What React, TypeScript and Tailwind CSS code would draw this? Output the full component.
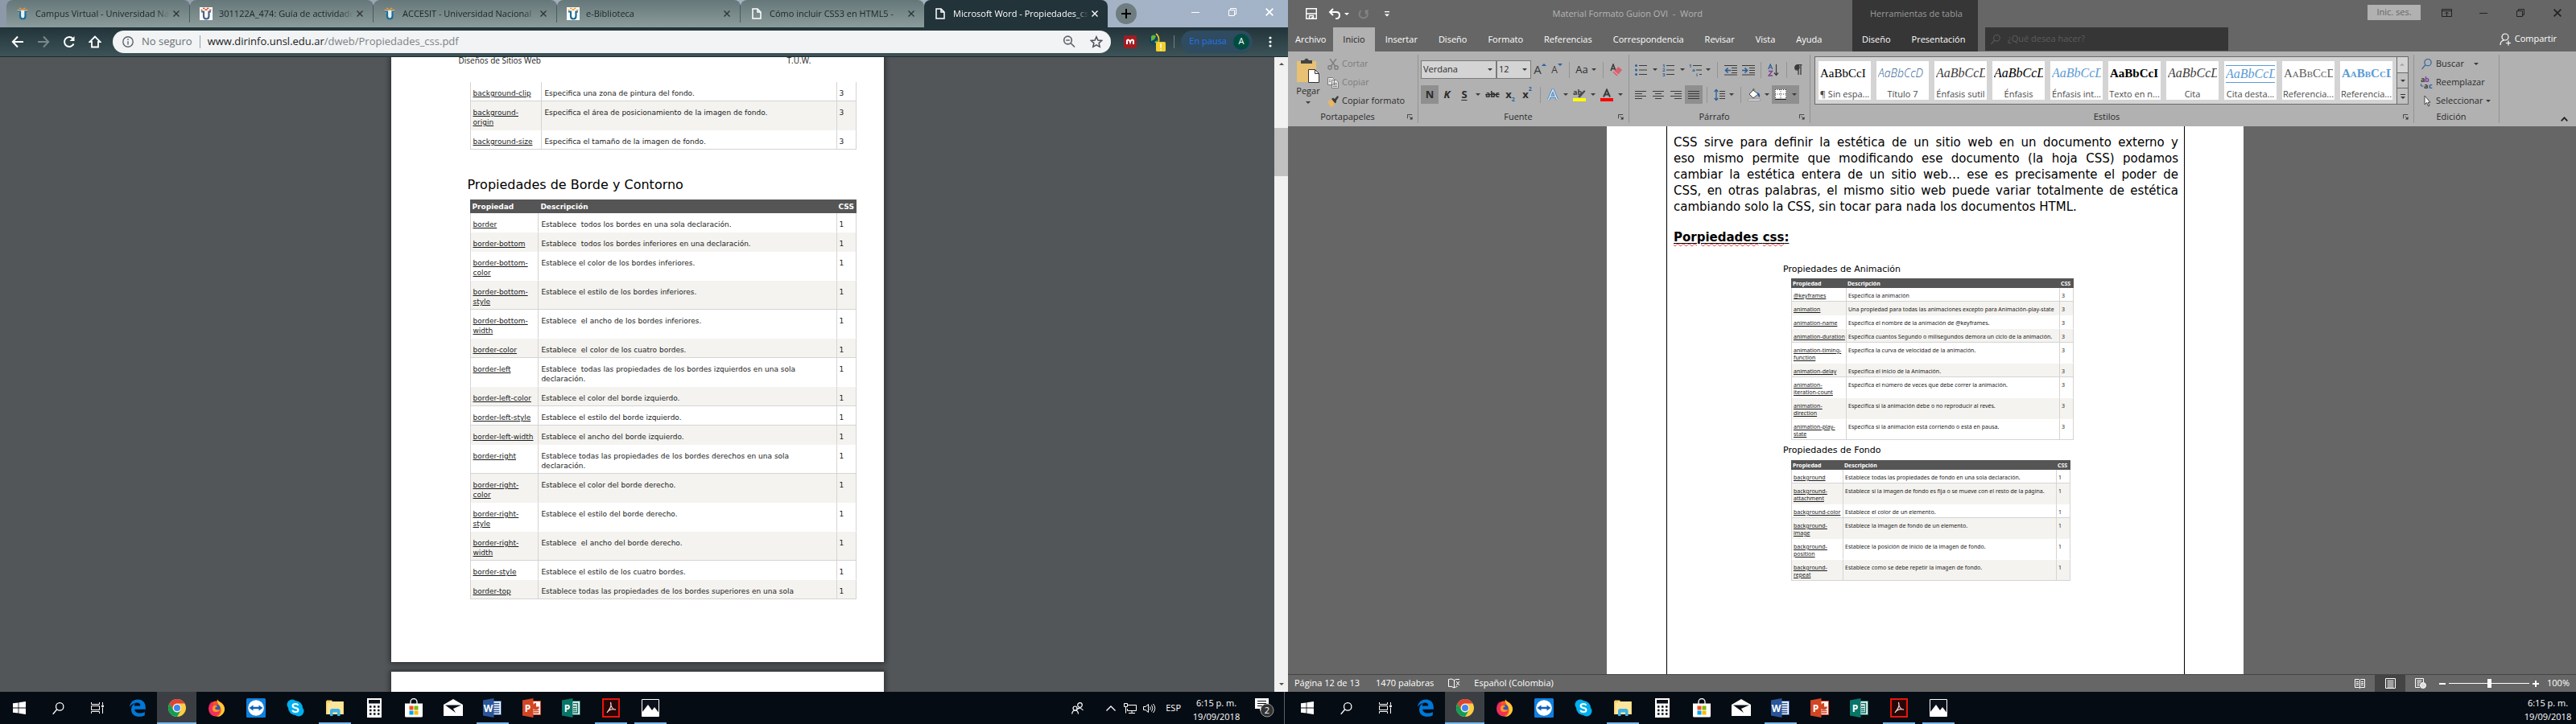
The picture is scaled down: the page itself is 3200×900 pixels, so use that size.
import React from "react";

type Kids = { children?: React.ReactNode };

/* ---------- shared bits ---------- */

const Caret = ({ className = "text-[#3a3a3a]" }: { className?: string }) => (
  <svg viewBox="0 0 6 3" className={"w-[6px] h-[3px] shrink-0 " + className}>
    <path d="M0 0h6L3 3z" fill="currentColor" />
  </svg>
);

const Lens = ({ className }: { className: string }) => (
  <svg viewBox="0 0 20 20" className={className} fill="none" stroke="currentColor" strokeWidth="1.5">
    <circle cx="12" cy="7.5" r="5.5" />
    <path d="M8 11.5L2 18.5" />
  </svg>
);

/* ---------- property tables ---------- */

type Row = { name: string; text: string; css: number; line?: boolean };

const backgroundRows: Row[] = [
  { name: "background-clip", text: "Especifica una zona de pintura del fondo.", css: 3, line: true },
  { name: "background-\norigin", text: "Especifica el área de posicionamiento de la imagen de fondo.", css: 3 },
  { name: "background-size", text: "Especifica el tamaño de la imagen de fondo.", css: 3, line: true },
];

const borderRows: Row[] = [
  { name: "border", text: "Establece  todos los bordes en una sola declaración.", css: 1 },
  { name: "border-bottom", text: "Establece  todos los bordes inferiores en una declaración.", css: 1 },
  { name: "border-bottom-\ncolor", text: "Establece el color de los bordes inferiores.", css: 1 },
  { name: "border-bottom-\nstyle", text: "Establece el estilo de los bordes inferiores.", css: 1, line: true },
  { name: "border-bottom-\nwidth", text: "Establece  el ancho de los bordes inferiores.", css: 1 },
  { name: "border-color", text: "Establece  el color de los cuatro bordes.", css: 1, line: true },
  { name: "border-left", text: "Establece  todas las propiedades de los bordes izquierdos en una sola\ndeclaración.", css: 1 },
  { name: "border-left-color", text: "Establece el color del borde izquierdo.", css: 1, line: true },
  { name: "border-left-style", text: "Establece el estilo del borde izquierdo.", css: 1, line: true },
  { name: "border-left-width", text: "Establece el ancho del borde izquierdo.", css: 1 },
  { name: "border-right", text: "Establece todas las propiedades de los bordes derechos en una sola\ndeclaración.", css: 1, line: true },
  { name: "border-right-\ncolor", text: "Establece el color del borde derecho.", css: 1 },
  { name: "border-right-\nstyle", text: "Establece el estilo del borde derecho.", css: 1 },
  { name: "border-right-\nwidth", text: "Establece  el ancho del borde derecho.", css: 1, line: true },
  { name: "border-style", text: "Establece el estilo de los cuatro bordes.", css: 1 },
  { name: "border-top", text: "Establece todas las propiedades de los bordes superiores en una sola", css: 1, line: true },
];

const animationRows: Row[] = [
  { name: "@keyframes", text: "Especifica la animación", css: 3, line: true },
  { name: "animation", text: "Una propiedad para todas las animaciones excepto para Animación-play-state", css: 3 },
  { name: "animation-name", text: "Especifica el nombre de la animación de @keyframes.", css: 3 },
  { name: "animation-duration", text: "Especifica cuantos Segundo o milisegundos demora un ciclo de la animación.", css: 3, line: true },
  { name: "animation-timing-\nfunction", text: "Especifica la curva de velocidad de la animación.", css: 3 },
  { name: "animation-delay", text: "Especifica el inicio de la Animación.", css: 3, line: true },
  { name: "animation-\niteration-count", text: "Especifica el número de veces que debe correr la animación.", css: 3 },
  { name: "animation-\ndirection", text: "Especifica si la animación debe o no reproducir al revés.", css: 3 },
  { name: "animation-play-\nstate", text: "Especifica si la animación está corriendo o está en pausa.", css: 3, line: true },
];

const fondoRows: Row[] = [
  { name: "background", text: "Establece todas las propiedades de fondo en una sola declaración.", css: 1, line: true },
  { name: "background-\nattachment", text: "Establece si la imagen de fondo es fija o se mueve con el resto de la página.", css: 1 },
  { name: "background-color", text: "Establece el color de un elemento.", css: 1, line: true },
  { name: "background-\nimage", text: "Establece la imagen de fondo de un elemento.", css: 1 },
  { name: "background-\nposition", text: "Establece la posición de inicio de la imagen de fondo.", css: 1 },
  { name: "background-\nrepeat", text: "Establece como se debe repetir la imagen de fondo.", css: 1, line: true },
];

function PropertyTable({ rows, small, cols, header = true }: { rows: Row[]; small?: boolean; cols: [string, string, string]; header?: boolean }) {
  const cell = small ? "pl-[2px] pt-[5px] pb-[2px]" : "pl-[3px] pt-[8px] pb-[3px]";
  const head = small ? "h-[12px] pl-[2px]" : "h-[17px] pl-[3px]";
  return (
    <table
      className={
        "table-fixed border-separate border-spacing-0 text-left text-[#1c1c1c] " +
        (small ? "text-[7px] leading-[9px] font-['Noto_Sans',sans-serif]" : "text-[9px] leading-[12px] font-['DejaVu_Sans',sans-serif]")
      }
    >
      <colgroup>
        {cols.map((c, i) => (
          <col key={i} className={c} />
        ))}
      </colgroup>
      {header && (
        <thead>
          <tr className="bg-[#555555] text-white">
            {["Propiedad", "Descripción", "CSS"].map((h) => (
              <th key={h} className={"p-0 font-bold " + head}>
                {h}
              </th>
            ))}
          </tr>
        </thead>
      )}
      <tbody>
        {rows.map((r, i) => {
          const line = r.line ? "border-b-[#d4d4d4]" : "border-b-transparent";
          const base = "align-top whitespace-pre border-l border-b border-l-[#d4d4d4] " + cell + " " + line;
          return (
            <tr key={r.name} className={i % 2 ? "bg-[#f4f3f0]" : "bg-white"}>
              <td className={base}>
                <a href="#" className="underline underline-offset-1">
                  {r.name}
                </a>
              </td>
              <td className={base}>{r.text}</td>
              <td className={base + " border-r border-r-[#d4d4d4]"}>{r.css}</td>
            </tr>
          );
        })}
      </tbody>
    </table>
  );
}

/* ---------- taskbar ---------- */

const WindowsLogo = () => (
  <svg viewBox="0 0 16 16" className="w-4 h-4" fill="#fff">
    <path d="M0 2.3l6.6-.9v6.2H0zM7.4 1.3L16 0v7.6H7.4zM0 8.4h6.6v6.2L0 13.700zM7.400 8.400H16V16l-8.600-1.200z" />
  </svg>
);
const TaskView = () => (
  <svg viewBox="0 0 16 16" className="w-4 h-4" fill="none" stroke="#fff" strokeWidth="1">
    <path d="M.5 1v2.500h10V1M.5 15v-2.500h10V15M.5 5.500h10v5H.5zM14.500 1v3M14.500 7.500V15" />
    <path d="M13.500 5h2v1.500h-2z" fill="#fff" />
  </svg>
);
const Edge = () => (
  <svg viewBox="0 0 20 22" className="w-5 h-[22px]" fill="#0078d7">
    <path d="M0 9.800C.7 4.200 4.600.500 10.200.500c6.200 0 9.600 4.300 9.600 10v2.200H6.300c.2 3.300 3 4.900 6.500 4.900 2.300 0 4.300-.6 6-1.600v4.300c-1.900 1-4.300 1.500-6.800 1.500-6 0-10-3.300-10-8.800 0-3.600 2-6.600 5-8.100-.7.9-1.100 2.200-1.200 3.500h7.500c0-2.300-1.200-3.900-4-3.900C5.600 4.500 2 6.600 0 9.800z" />
  </svg>
);
const Chrome = () => (
  <svg viewBox="0 0 22 22" className="w-[22px] h-[22px]">
    <circle cx="11" cy="11" r="11" fill="#ffcd40" />
    <path d="M11 0a11 11 0 0 1 9.600 5.500H11A5.500 5.500 0 0 0 6.200 13.700L1.500 5.500A11 11 0 0 1 11 0z" fill="#db4437" />
    <path d="M1.500 5.500l4.800 8.300A5.500 5.500 0 0 0 15.800 13.700L11 22A11 11 0 0 1 1.500 5.500z" fill="#0f9d58" />
    <circle cx="11" cy="11" r="5.200" fill="#f1f1f1" />
    <circle cx="11" cy="11" r="4" fill="#4285f4" />
  </svg>
);
const Firefox = () => (
  <svg viewBox="0 0 22 22" className="w-[22px] h-[22px]">
    <circle cx="11" cy="12" r="9.800" fill="#ff4f2b" />
    <path d="M12 0c1 4 8 5 9 11 .8 6-4 11-9.500 11C17 19 18 14 15 9c-1-2-4-5-3-9z" fill="#ffcc33" />
    <path d="M1 12C1 7 3 4 5 2.500 5 5 6 6 8 6c-2 2-3 5-1 8 1.500 2 5 3 8 1-1 4-4 6-7 6-4 0-7-4-7-9z" fill="#e31587" opacity=".55" />
    <circle cx="11.500" cy="11" r="4" fill="#3a55b5" />
    <path d="M7 9c2-2 4-1 5 0l-3 2c0 2 3 3 6 2-1 3-5 4-8 2-1.500-1.500-1.500-4 0-6z" fill="#ff9a1f" />
  </svg>
);
const TeamViewer = () => (
  <svg viewBox="0 0 24 24" className="w-6 h-6">
    <rect width="24" height="24" rx="1.500" fill="#0e80e0" />
    <circle cx="12" cy="12" r="9.800" fill="#fff" />
    <path d="M3.500 12l5-3.500v2.200h7V8.500l5 3.500-5 3.500v-2.200h-7v2.200z" fill="#0e60b8" />
  </svg>
);
const Skype = () => (
  <svg viewBox="0 0 22 22" className="w-[22px] h-[22px]">
    <circle cx="7" cy="7" r="6.500" fill="#00aff0" />
    <circle cx="15" cy="15" r="6.500" fill="#00aff0" />
    <circle cx="11" cy="11" r="9" fill="#00aff0" />
    <path d="M14.500 7.800C13.800 6.600 12.500 6 11 6 9 6 7.500 7 7.500 8.500c0 3.500 7 1.600 7 5 0 1.600-1.600 2.500-3.500 2.500-1.800 0-3.200-.7-3.900-2" fill="none" stroke="#fff" strokeWidth="2" />
  </svg>
);
const Explorer = () => (
  <svg viewBox="0 0 22 20" className="w-[22px] h-5">
    <path d="M0 2l1-1.500h6L8 2h14v16H0z" fill="#f5ce69" />
    <path d="M1.500 3.500h3l1-1.500H21V18H1.500z" fill="#fde69c" />
    <path d="M5 20v-7.500L7 11h8.500l2 1.500V20h-3.500v-4.500H8.500V20z" fill="#3fb0e8" />
  </svg>
);
const Calculator = () => (
  <svg viewBox="0 0 18 24" className="w-[18px] h-6">
    <path d="M0 0h18v24H0z" fill="#fff" />
    <path d="M2 2h14v4.500H2z" fill="#0a1019" />
    <path d="M3 10.500h13M3 15h13M3 19.500h13" stroke="#0a1019" strokeWidth="2.500" strokeDasharray="2.500 2.500" />
  </svg>
);
const Store = () => (
  <svg viewBox="0 0 22 24" className="w-[22px] h-6">
    <path d="M7 8V4.500a4 4 0 0 1 8 0V8" fill="none" stroke="#fff" strokeWidth="1.300" />
    <path d="M0 6.500h22V22q0 1.500-1.500 1.500h-19Q0 23.500 0 22z" fill="#fff" />
    <path d="M5.500 9.500h5v5h-5z" fill="#f25022" />
    <path d="M11.500 9.500h5v5h-5z" fill="#7fba00" />
    <path d="M5.500 15.500h5v5h-5z" fill="#00a4ef" />
    <path d="M11.500 15.500h5v5h-5z" fill="#ffb900" />
  </svg>
);
const Mail = () => (
  <svg viewBox="0 0 24 22" className="w-6 h-[22px]">
    <path d="M0 7l12-7 12 7v14H0z" fill="#fff" />
    <path d="M2 7.500l20 0-10 4.500 3 5z" fill="#0a1019" />
  </svg>
);

function OfficeIcon({ letter, color, dark, kind }: { letter: string; color: string; dark: string; kind: "doc" | "chart" | "pub" }) {
  return (
    <svg viewBox="0 0 23 24" className="w-[23px] h-6">
      <path d="M12 3.500h10.500v17H12z" fill={kind === "doc" ? "#fff" : "#fdf3f0"} stroke={color} />
      {kind === "doc" && <path d="M13 6.500h7.500M13 9.500h7.500M13 12.500h7.500M13 15.500h7.500M13 18h7.500" stroke={color} strokeWidth="1.300" />}
      {kind === "chart" && (
        <>
          <path d="M17 6v4.500h4A4.300 4.300 0 1 1 17 6z" fill={color} />
          <path d="M13.500 15.500h7M13.500 18h7" stroke={color} strokeWidth="1.300" />
        </>
      )}
      {kind === "pub" && <path d="M14 6.500h5.500V18H14M14 10h4M14 13h4M14 15.500h4" stroke={color} strokeWidth="1.500" fill="none" />}
      <path d="M0 2.500L13.500 0v24L0 21.500z" fill={dark} />
      <text x="6.500" y="16.500" textAnchor="middle" fontSize="12" fontWeight="700" fill="#fff" className="font-['Open_Sans',sans-serif]">
        {letter}
      </text>
    </svg>
  );
}
const Acrobat = () => (
  <svg viewBox="0 0 22 24" className="w-[22px] h-6">
    <path d="M1 1h20v22H1z" fill="#2b0505" stroke="#e2170c" strokeWidth="2" />
    <path d="M10.500 5c1.500 4 0 7-4.500 13 2-3.500 6-5 11-4-3.500.5-6.500-3.500-6.500-9z" fill="none" stroke="#e8d8d8" strokeWidth="1.200" />
  </svg>
);
const Photos = () => (
  <svg viewBox="0 0 22 22" className="w-[22px] h-[22px]">
    <path d="M.5.500h21v21H.5z" fill="#0a1019" stroke="#fff" />
    <path d="M1 21v-5l7-9 5 7 3-4 5 6.500V21z" fill="#fff" />
  </svg>
);

const taskItems: { label: string; icon: React.ReactNode; open?: boolean; active?: boolean }[] = [
  { label: "Edge", icon: <Edge /> },
  { label: "Chrome", icon: <Chrome />, active: true },
  { label: "Firefox", icon: <Firefox /> },
  { label: "TeamViewer", icon: <TeamViewer /> },
  { label: "Skype", icon: <Skype /> },
  { label: "Explorador", icon: <Explorer />, open: true },
  { label: "Calculadora", icon: <Calculator /> },
  { label: "Tienda", icon: <Store /> },
  { label: "Correo", icon: <Mail /> },
  { label: "Word", icon: <OfficeIcon letter="W" color="#2b579a" dark="#2a5699" kind="doc" />, open: true },
  { label: "PowerPoint", icon: <OfficeIcon letter="P" color="#d24625" dark="#d24625" kind="chart" /> },
  { label: "Publisher", icon: <OfficeIcon letter="P" color="#077568" dark="#077568" kind="pub" /> },
  { label: "Acrobat", icon: <Acrobat />, open: true },
  { label: "Fotos", icon: <Photos />, open: true },
];

function Taskbar({ children }: Kids) {
  return (
    <nav className="h-10 shrink-0 flex items-stretch bg-[#060c14] text-white font-['Open_Sans',sans-serif] text-[11px]">
      <button aria-label="Inicio" className="w-12 flex items-center justify-center"><WindowsLogo /></button>
      <button aria-label="Buscar" className="w-12 flex items-center justify-center"><Lens className="w-[17px] h-[17px]" /></button>
      <button aria-label="Vista de tareas" className="w-[50px] flex items-center justify-center"><TaskView /></button>
      {taskItems.map((t) => (
        <button key={t.label} aria-label={t.label} className="w-[49px] flex flex-col items-center justify-between">
          <span className={"flex-1 self-stretch flex items-center justify-center pt-[2px] " + (t.active ? "bg-[#3b3f44]" : "")}>{t.icon}</span>
          <span className={"h-[2px] " + (t.active ? "w-full bg-[#76b9ed]" : t.open ? "w-10 bg-[#76b9ed]" : "w-0")} />
        </button>
      ))}
      <div className="ml-auto flex items-center">{children}</div>
    </nav>
  );
}

const Clock = () => (
  <div className="w-[62px] text-center leading-[17px] pt-[3px]">
    <div>6:15 p. m.</div>
    <div>19/09/2018</div>
  </div>
);

/* ---------- browser ---------- */

const Unad = ({ boxed, red }: { boxed?: boolean; red?: boolean }) => (
  <svg viewBox="0 0 16 16" className="w-4 h-4 shrink-0">
    {boxed && <path d="M0 0h16v16H0z" fill="#fff" />}
    {!boxed && <path d="M2.500 5.500h4v6q0 2 1.800 2 1.700 0 1.700-2v-6h3.500" fill="none" stroke="#e6f2f5" strokeWidth="3.600" />}
    <path d="M2 5.500h3v5.500q0 3.500 3.300 3.500 3.200 0 3.200-3.500V5.500H14" fill="none" stroke={red ? "#4a6484" : "#1c6c96"} strokeWidth="2.200" />
    <path d="M1.500 3.500h2M4 1.500h2.500M9 1.500h2.500M12 3.500h2.500M6.500 3.200h3" stroke={red ? "#d8502a" : "#f39a2c"} strokeWidth="1.700" />
  </svg>
);
const PageIcon = () => (
  <svg viewBox="0 0 12 14" className="w-3 h-[14px] shrink-0 mx-[2px]" fill="none" stroke="#fff" strokeWidth="1.500">
    <path d="M1 1h6l4 4v8H1zM7 1v4h4" />
  </svg>
);
const Cross = ({ className = "w-2 h-2" }: { className?: string }) => (
  <svg viewBox="0 0 8 8" className={"shrink-0 " + className} stroke="currentColor" strokeWidth="1.400">
    <path d="M.5.500l7 7M7.500.500l-7 7" />
  </svg>
);

const tabs = [
  { title: "Campus Virtual - Universidad Nacional", icon: <Unad /> },
  { title: "301122A_474: Guía de actividades", icon: <Unad boxed red /> },
  { title: "ACCESIT - Universidad Nacional", icon: <Unad /> },
  { title: "e-Biblioteca", icon: <Unad boxed /> },
  { title: "Cómo incluir CSS3 en HTML5 - ", icon: <PageIcon /> },
  { title: "Microsoft Word - Propiedades_css", icon: <PageIcon />, active: true },
];

const toolIcon = "w-8 h-7 flex items-center justify-center";

function Browser() {
  return (
    <section className="flex flex-col min-h-0 flex-1 bg-[#525659] font-['Open_Sans',sans-serif]">
      <header className="shrink-0">
        <div className="h-[34px] flex pl-2 text-[11px] bg-linear-to-r from-[#8d99a8] via-[#a6b1be] to-[#a3b3c8]">
          {tabs.map((t, i) => (
            <div
              key={t.title}
              className={
                "w-[228px] flex items-center pl-3 pr-3 rounded-t-lg " +
                (t.active ? "bg-[#22333a] text-white" : "bg-linear-to-b from-[#657779] to-[#8c9c9c] text-[#1c2426]")
              }
            >
              {t.icon}
              <span className="ml-2 flex-1 overflow-hidden whitespace-pre mask-r-from-90%">{t.title}</span>
              <button aria-label="Cerrar pestaña" className={"ml-1 " + (t.active ? "text-white" : "text-[#2c3436]")}><Cross /></button>
              {i < 4 && <span className="w-px h-[22px] bg-[#4d5b5f] ml-3 -mr-3" />}
            </div>
          ))}
          <button aria-label="Nueva pestaña" className="self-center ml-[10px] w-[26px] h-[26px] rounded-full bg-[#6f7d80] flex items-center justify-center text-black">
            <svg viewBox="0 0 12 12" className="w-3 h-3" stroke="currentColor" strokeWidth="2"><path d="M6 0v12M0 6h12" /></svg>
          </button>
          <div className="ml-auto flex text-white pb-[5px]">
            <button aria-label="Minimizar" className="w-[46px] flex items-center justify-center"><svg viewBox="0 0 10 10" className="w-[10px] h-[10px]" stroke="currentColor"><path d="M0 5.500h10" /></svg></button>
            <button aria-label="Restaurar" className="w-[46px] flex items-center justify-center"><svg viewBox="0 0 10 10" className="w-[10px] h-[10px]" stroke="currentColor" fill="none"><path d="M.5 2.500h7v7h-7zM2.500 2.500v-2h7v7h-2" /></svg></button>
            <button aria-label="Cerrar" className="w-[46px] flex items-center justify-center"><Cross className="w-[10px] h-[10px]" /></button>
          </div>
        </div>
        <div className="h-[37px] flex items-center pl-[6px] pb-px text-white border-b border-[#1e2b30] bg-linear-to-b from-[#22343a] to-[#3c5357]">
          <button aria-label="Atrás" className={toolIcon}><svg viewBox="0 0 16 16" className="w-4 h-4" fill="none" stroke="currentColor" strokeWidth="2"><path d="M15 8H2M8 1.500L1.800 8 8 14.500" /></svg></button>
          <button aria-label="Adelante" className={toolIcon + " text-[#7b888b]"}><svg viewBox="0 0 16 16" className="w-4 h-4" fill="none" stroke="currentColor" strokeWidth="2"><path d="M1 8h13M8 1.500L14.200 8 8 14.500" /></svg></button>
          <button aria-label="Recargar" className={toolIcon}><svg viewBox="0 0 16 16" className="w-4 h-4" fill="none" stroke="currentColor" strokeWidth="2"><path d="M13.500 10.500A6 6 0 1 1 12.500 4" /><path d="M14.500 1v6h-6z" fill="currentColor" stroke="none" /></svg></button>
          <button aria-label="Inicio" className={toolIcon}><svg viewBox="0 0 16 16" className="w-4 h-4" fill="none" stroke="currentColor" strokeWidth="1.800"><path d="M8 1.500L1.500 8H4v6.500h8V8h2.500z" /></svg></button>
          <div className="ml-[6px] h-7 flex-1 rounded-full bg-[#f1f3f4] flex items-center pl-3 pr-[10px] text-[13px]">
            <svg viewBox="0 0 14 14" className="w-[14px] h-[14px]" fill="none" stroke="#5f6368" strokeWidth="1.400"><circle cx="7" cy="7" r="6.200" /><path d="M7 6.200v4.300M7 3.300v1.600" /></svg>
            <span className="ml-[10px] text-[#6b7074]">No seguro</span>
            <span className="w-px h-4 bg-[#9aa0a6] mx-[9px]" />
            <span className="flex-1 text-[#7d8286]"><span className="text-[#202124]">www.dirinfo.unsl.edu.ar</span>/dweb/Propiedades_css.pdf</span>
            <svg viewBox="0 0 16 16" className="w-4 h-4" fill="none" stroke="#5f6368" strokeWidth="1.700"><circle cx="6.500" cy="6" r="4.800" /><path d="M10 9.500l5 5M4.200 6h4.600" /></svg>
            <svg viewBox="0 0 16 16" className="w-4 h-4 ml-[18px]" fill="none" stroke="#4d5156" strokeWidth="1.500"><path d="M8 1.700l1.900 4.400 4.800.4-3.600 3.100 1.100 4.700L8 11.800l-4.200 2.500 1.100-4.700L1.300 6.500l4.800-.4z" /></svg>
          </div>
          <div className="flex items-center">
            <svg viewBox="0 0 16 16" className="w-4 h-4 ml-4"><rect width="16" height="16" rx="1.500" fill="#a01d22" /><path d="M4 11V7q0-1.500 1.500-1.500T8 8.500q1-3 2.500-3T12 7v4" stroke="#fff" strokeWidth="2" fill="none" /></svg>
            <svg viewBox="0 0 24 24" className="w-6 h-6 ml-[14px]">
              <circle cx="8" cy="9" r="6.500" fill="#0d4468" />
              <path d="M4 5q3-3 6 0l-2 4-4 2zM8 12l4-2-1 5z" fill="#6eb52a" />
              <path d="M10 2q5 3 3 12" stroke="#f2c61d" strokeWidth="1.800" fill="none" />
              <rect x="10" y="12" width="12" height="12" rx="1.500" fill="#f3cf2e" />
              <path d="M16 14v5.500M16 21v1.500" stroke="#fff" strokeWidth="1.500" />
            </svg>
            <span className="w-px h-4 bg-[#71817f] mx-[8px]" />
            <button className="h-7 rounded-full bg-[#2f4b60] pl-[10px] pr-1 flex items-center gap-2 text-[11px] text-[#2275ea]">
              En pausa
              <span className="w-5 h-5 rounded-full bg-[#004d40] text-white text-[11px] flex items-center justify-center">A</span>
            </button>
            <button aria-label="Menú" className="w-11 h-7 flex items-center justify-center"><svg viewBox="0 0 4 14" className="w-1 h-[14px]" fill="#fff"><circle cx="2" cy="2" r="1.600" /><circle cx="2" cy="7" r="1.600" /><circle cx="2" cy="12" r="1.600" /></svg></button>
          </div>
        </div>
      </header>

      <div className="flex-1 min-h-0 flex">
        <main className="flex-1 min-w-0 overflow-hidden flex flex-col items-center gap-3">
          <article className="w-[612px] h-[752px] shrink-0 bg-white shadow-[0_0_6px_2px_rgba(0,0,0,0.45)] pl-[95px] pr-[34px]">
            <div className="-mt-[3px] flex justify-between pr-14 -ml-[11px] text-[10px] leading-[14px] text-[#222]">
              <span>Diseños de Sitios Web</span>
              <span>T.U.W.</span>
            </div>
            <div className="mt-5 ml-[3px]">
              <PropertyTable rows={backgroundRows} header={false} cols={["w-[89px]", "w-[367px]", "w-[25px]"]} />
            </div>
            <h1 className="mt-8 mb-[6px] text-[16px] leading-6 text-black font-['DejaVu_Sans',sans-serif]">Propiedades de Borde y Contorno</h1>
            <div className="ml-[3px]">
              <PropertyTable rows={borderRows} cols={["w-[85px]", "w-[371px]", "w-[25px]"]} />
            </div>
          </article>
          <article className="w-[612px] h-[752px] shrink-0 bg-white shadow-[0_0_6px_2px_rgba(0,0,0,0.45)]" />
        </main>
        <div className="w-[17px] bg-[#f1f1f1] flex flex-col items-center text-[#505050]">
          <Caret className="rotate-180 mt-[7px] text-[#505050]" />
          <div className="w-full h-[60px] mt-[78px] bg-[#c1c1c1]" />
          <Caret className="mt-auto mb-2 text-[#505050]" />
        </div>
      </div>
    </section>
  );
}

/* ---------- word processor ---------- */

const Slot = ({ w, on, label, children }: Kids & { w: string; on?: boolean; label: string }) => (
  <button aria-label={label} className={"h-[23px] shrink-0 flex items-center justify-center " + w + (on ? " bg-[#8f8f8f]" : "")}>
    {children}
  </button>
);
const Sep = ({ w }: { w: string }) => (
  <span className={"h-5 shrink-0 flex justify-center " + w}>
    <span className="w-px bg-[#939393]" />
  </span>
);
const Launcher = () => (
  <svg viewBox="0 0 8 8" className="w-[7px] h-[7px]" fill="none" stroke="#333">
    <path d="M.5 6V.500H7M3 3l3 3" />
    <path d="M7.500 3.500v4h-4z" fill="#333" stroke="none" />
  </svg>
);
const Lines = ({ ends }: { ends: [number, number][] }) => (
  <svg viewBox="0 0 14 12" className="w-[14px] h-3" stroke="#3b3b3b">
    {ends.map(([a, b], i) => (
      <path key={i} d={`M${a} ${i * 3 + 1.5}H${b}`} />
    ))}
  </svg>
);

function Group({ title, width, launcher, children }: Kids & { title: string; width: string; launcher?: boolean }) {
  return (
    <div className={"relative flex flex-col shrink-0 border-r border-[#939393] h-[85px] " + width}>
      <div className="flex-1">{children}</div>
      <div className="h-4 flex items-center text-[#2b2b2b]">
        <span className="flex-1 text-center">{title}</span>
        <span className="w-[13px]">{launcher && <Launcher />}</span>
      </div>
    </div>
  );
}

const styleCards = [
  { name: "¶ Sin espa...", sample: "AaBbCcI", look: "text-[15px] text-black" },
  { name: "Título 7", sample: "AaBbCcD", look: "text-[14px] text-[#2e6094] italic font-['Open_Sans',sans-serif] font-light" },
  { name: "Énfasis sutil", sample: "AaBbCcD", look: "text-[16px] text-[#404040] italic" },
  { name: "Énfasis", sample: "AaBbCcD", look: "text-[16px] text-black italic" },
  { name: "Énfasis int...", sample: "AaBbCcD", look: "text-[16px] text-[#5b9bd5] italic" },
  { name: "Texto en n...", sample: "AaBbCcI", look: "text-[15px] text-black font-bold" },
  { name: "Cita", sample: "AaBbCcD", look: "text-[16px] text-[#404040] italic" },
  { name: "Cita desta...", sample: "AaBbCcD", look: "text-[16px] text-[#5b9bd5] italic border-y border-[#5b9bd5]" },
  { name: "Referencia...", sample: "AaBbCcD", look: "text-[15px] text-[#5a5a5a] [font-variant:small-caps]" },
  { name: "Referencia...", sample: "AaBbCcD", look: "text-[15px] text-[#5b9bd5] font-bold [font-variant:small-caps]" },
];

function FontSelect({ label, value, width }: { label: string; value: string; width: string }) {
  return (
    <label className={"relative h-[23px] flex " + width}>
      <span className="sr-only">{label}</span>
      <select defaultValue={value} className="appearance-none w-full h-full border border-[#7a7a7a] bg-[#d4d4d4] pl-[2px] text-[11px] text-[#2b2b2b]">
        <option>{value}</option>
      </select>
      <span className="absolute right-[5px] top-[10px] pointer-events-none"><Caret /></span>
    </label>
  );
}

const left: [number, number][] = [[0, 14], [0, 9], [0, 14], [0, 9]];
const center: [number, number][] = [[0, 14], [3, 11], [0, 14], [3, 11]];
const right: [number, number][] = [[0, 14], [5, 14], [0, 14], [5, 14]];
const full: [number, number][] = [[0, 14], [0, 14], [0, 14], [0, 14]];

const ListIcon = ({ marks }: { marks: "dots" | "nums" | "multi" }) => (
  <svg viewBox="0 0 16 16" className="w-4 h-4" stroke="#3b3b3b">
    {marks === "multi" ? <path d="M5 2.500h11M9 8h7M13 13.500h3" /> : <path d="M5 2.500h10M5 8h10M5 13.500h10" />}
    <g fill="#2a6099" stroke="none" fontSize="6" fontWeight="700" className="font-['Open_Sans',sans-serif]">
      {marks === "dots" && [2.5, 8, 13.5].map((y) => <circle key={y} cx="1.500" cy={y} r="1.500" />)}
      {marks === "nums" && <><text x="0" y="4.500">1</text><text x="0" y="10.200">2</text><text x="0" y="16">3</text></>}
      {marks === "multi" && <><text x="0" y="4.500">1</text><text x="4" y="10.200">a</text><text x="9" y="16">i</text></>}
    </g>
  </svg>
);
const IndentIcon = ({ out }: { out?: boolean }) => (
  <svg viewBox="0 0 16 14" className="w-4 h-[14px]" stroke="#3b3b3b" fill="none">
    <path d="M0 1.500h16M9 4.500h7M9 7.500h7M9 10.500h7M0 13h16" />
    <path d={out ? "M8 7.500H1.500M4.500 4.500l-3 3 3 3" : "M0 7.500h6.500M3.500 4.500l3 3-3 3"} stroke="#2a6099" strokeWidth="1.600" />
  </svg>
);

const menu = [
  { t: "Archivo", w: "px-[9px]" },
  { t: "Inicio", w: "px-3", on: true },
  { t: "Insertar", w: "px-[13px]" },
  { t: "Diseño", w: "px-[13px]" },
  { t: "Formato", w: "px-[13px]" },
  { t: "Referencias", w: "px-[13px]" },
  { t: "Correspondencia", w: "px-[13px]" },
  { t: "Revisar", w: "px-[13px]" },
  { t: "Vista", w: "px-[13px]" },
  { t: "Ayuda", w: "px-[13px]" },
];

function WordProcessor() {
  return (
    <section className="flex flex-col min-h-0 flex-1 bg-[#666666] font-['Open_Sans',sans-serif] text-[11px]">
      <header className="h-16 shrink-0 flex text-white">
        <div className="w-[701px] flex flex-col">
          <div className="h-[34px] flex items-center pl-[22px] pr-[186px]">
            <svg viewBox="0 0 14 14" className="w-[14px] h-[14px]" fill="none" stroke="#fff" strokeWidth="1.400"><path d="M.7.700h12.600v12.600H.7zM.7 7h12.600M4.500 13V9.500h5V13M8 11v2" /></svg>
            <svg viewBox="0 0 16 14" className="w-4 h-[14px] ml-[14px]" fill="none" stroke="#fff" strokeWidth="2"><path d="M6 1L2 5l4 4M2.500 5H10q4 0 4 4t-5 4.500" /></svg>
            <Caret className="ml-1 text-white" />
            <svg viewBox="0 0 14 14" className="w-[13px] h-[13px] ml-[11px]" fill="none" stroke="#838383" strokeWidth="2"><path d="M4 2.500A5.500 5.500 0 1 0 10.500 2.500M10.500 7V2.500H14" /></svg>
            <svg viewBox="0 0 6 7" className="w-[6px] h-[7px] ml-5" fill="#fff"><path d="M0 0h6v1.200H0zM0 3.500h6l-3 3z" /></svg>
            <span className="ml-auto whitespace-pre text-[11px] text-[#b5b5b5]">Material Formato Guion OVI  -  Word</span>
          </div>
          <nav className="flex-1 flex items-stretch">
            {menu.map((m) => (
              <button key={m.t} className={m.w + (m.on ? " bg-[#b1b1b1] text-[#262626]" : "")}>{m.t}</button>
            ))}
          </nav>
        </div>
        <div className="w-[156px] bg-[#363636] flex flex-col">
          <div className="h-[34px] pl-[22px] flex items-center text-[#9a9a9a]">Herramientas de tabla</div>
          <div className="flex-1 flex items-center">
            <button className="px-3">Diseño</button>
            <button className="px-[14px]">Presentación</button>
          </div>
        </div>
        <div className="flex-1 flex flex-col">
          <div className="h-[34px] flex items-center justify-end pb-[3px] text-[#222]">
            <button className="w-[66px] h-[19px] mr-[9px] bg-[#b1b1b1] text-[#666]">Inic. ses.</button>
            <button aria-label="Opciones de cinta" className="w-[46px] flex justify-center"><svg viewBox="0 0 13 10" className="w-[13px] h-[10px]" fill="none" stroke="currentColor"><path d="M.5.500h12v9H.5zM.5 2.500h12M6.500 9V4M4.500 6l2-2 2 2" /></svg></button>
            <button aria-label="Minimizar" className="w-[46px] flex justify-center"><svg viewBox="0 0 10 10" className="w-[10px] h-[10px]" stroke="currentColor"><path d="M0 5.500h10" /></svg></button>
            <button aria-label="Restaurar" className="w-[46px] flex justify-center"><svg viewBox="0 0 10 10" className="w-[10px] h-[10px]" stroke="currentColor" fill="none"><path d="M.5 2.500h7v7h-7zM2.500 2.500v-2h7v7h-2" /></svg></button>
            <button aria-label="Cerrar" className="w-[46px] flex justify-center"><Cross className="w-[10px] h-[10px]" /></button>
          </div>
          <div className="flex-1 flex items-start justify-between pl-[9px] pr-6">
            <label className="w-[302px] h-[29px] bg-[#363636] flex items-center pl-[6px] text-[#5c5c5c]">
              <Lens className="w-[14px] h-[14px]" />
              <input aria-label="¿Qué desea hacer?" placeholder="¿Qué desea hacer?" className="ml-2 flex-1 bg-transparent outline-none placeholder:text-[#5c5c5c]" />
            </label>
            <button className="h-[29px] flex items-center gap-1">
              <svg viewBox="0 0 15 16" className="w-[15px] h-4" fill="none" stroke="#fff" strokeWidth="1.200"><circle cx="7" cy="5" r="4" /><path d="M1 15q0-5 4.500-6M11 9.500v6M8 12.500h6" /></svg>
              Compartir
            </button>
          </div>
        </div>
      </header>

      <div className="h-[93px] shrink-0 bg-[#b1b1b1] pt-1 flex text-[#2b2b2b]">
        <Group title="Portapapeles" width="w-[162px]" launcher>
          <div className="flex">
            <button className="w-12 ml-px flex flex-col items-center pt-1">
              <svg viewBox="0 0 28 31" className="w-7 h-[31px]">
                <path d="M0 4h24v26H0z" fill="#e8c173" />
                <path d="M5 3h4q3-5 6 0h4v4H5z" fill="#444" />
                <path d="M14.500 14.500h8l5 5v11h-13z" fill="#fff" stroke="#333" />
                <path d="M22.500 14.500v5h5" fill="none" stroke="#333" />
              </svg>
              <span className="mt-[2px]">Pegar</span>
              <span className="mt-1"><Caret /></span>
            </button>
            <div className="flex flex-col">
              <button className="h-[23px] flex items-center gap-1 text-[#7d7d7d]">
                <svg viewBox="0 0 14 14" className="w-[14px] h-[14px]" fill="none" stroke="currentColor" strokeWidth="1.400"><path d="M3 0l6.500 9M11 0L4.500 9" /><circle cx="3" cy="11" r="2.200" /><circle cx="11" cy="11" r="2.200" /></svg>
                Cortar
              </button>
              <button className="h-[23px] flex items-center gap-1 text-[#7d7d7d]">
                <svg viewBox="0 0 14 14" className="w-[14px] h-[14px]" fill="#e6e6e6" stroke="currentColor"><path d="M.5.500h6l2 2v7h-8zM5.500 3.500h5.500l2.500 2.500v7.500h-8z" /><path d="M7 7.500h5M7 9.500h5M7 11.500h5M2 3.500h2M2 5.500h2" /></svg>
                Copiar
              </button>
              <button className="h-[23px] flex items-center gap-1">
                <svg viewBox="0 0 14 14" className="w-[14px] h-[14px]"><path d="M0 7l5-2.500L9.500 9 6 14 3.500 13.500z" fill="#e8b666" /><path d="M5 4l2-1.500 2 1.500L12.500 0 14 1.500 11 6v2L9.500 9.500z" fill="#3d3d3d" /></svg>
                Copiar formato
              </button>
            </div>
          </div>
        </Group>

        <Group title="Fuente" width="w-[262px]" launcher>
          <div className="flex items-center pl-[3px] pt-[7px]">
            <FontSelect label="Fuente" value="Verdana" width="w-[94px]" />
            <FontSelect label="Tamaño" value="12" width="w-[43px]" />
            <Slot w="w-[22px]" label="Agrandar"><span className="text-[15px] text-[#3b3b3b]">A</span><span className="self-start rotate-180 mt-1"><Caret className="text-[#2a6099]" /></span></Slot>
            <Slot w="w-5" label="Reducir"><span className="text-[12px] text-[#3b3b3b]">A</span><span className="self-start mt-1"><Caret className="text-[#2a6099]" /></span></Slot>
            <Sep w="w-[10px]" />
            <Slot w="w-8" label="Mayúsculas"><span className="text-[13px] mr-1">Aa</span><Caret /></Slot>
            <Sep w="w-[10px]" />
            <Slot w="w-6" label="Borrar formato">
              <svg viewBox="0 0 16 16" className="w-4 h-4"><path d="M1 9L4 1l3 8M2 6.500h4" fill="none" stroke="#3b3b3b" strokeWidth="1.500" /><path d="M10.500 4l4.500 4-6.500 7.500-5-4.500z" fill="#d9606e" /><path d="M5 9.500l5 4.300" stroke="#f0b3ba" /></svg>
            </Slot>
          </div>
          <div className="flex items-center pl-[3px] pt-2 text-[13px]">
            <Slot w="w-[22px]" on label="Negrita"><b>N</b></Slot>
            <Slot w="w-[21px]" label="Cursiva"><b className="italic">K</b></Slot>
            <Slot w="w-[22px]" label="Subrayado"><b className="underline underline-offset-2">S</b></Slot>
            <Slot w="w-3" label="Tipo de subrayado"><Caret /></Slot>
            <Slot w="w-6" label="Tachado"><b className="line-through text-[10px]">abc</b></Slot>
            <Slot w="w-5" label="Subíndice"><b>x</b><b className="text-[7px] text-[#2a6099] self-end">2</b></Slot>
            <Slot w="w-[22px]" label="Superíndice"><b>x</b><b className="text-[7px] text-[#2a6099] self-start">2</b></Slot>
            <Sep w="w-[10px]" />
            <Slot w="w-[22px]" label="Efectos de texto">
              <svg viewBox="0 0 14 16" className="w-[14px] h-4"><path d="M1.500 14L7 1.500 12.500 14M3.500 10h7" fill="none" stroke="#5c8fc4" strokeWidth="3.400" /><path d="M1.500 14L7 1.500 12.500 14M3.500 10h7" fill="none" stroke="#e3edf7" strokeWidth="1.200" /></svg>
            </Slot>
            <Slot w="w-[10px]" label="Más efectos"><Caret /></Slot>
            <Slot w="w-6" label="Resaltado">
              <svg viewBox="0 0 16 16" className="w-4 h-4"><text x="0" y="8" fontSize="9" fontWeight="700" fill="#3b3b3b" className="font-['Open_Sans',sans-serif]">ab</text><path d="M6 10l8-8 1.500 1.500-7 8z" fill="#4a4a4a" /><path d="M0 12h16v4H0z" fill="#ff0" /></svg>
            </Slot>
            <Slot w="w-[10px]" label="Color de resaltado"><Caret /></Slot>
            <Slot w="w-6" label="Color de fuente">
              <svg viewBox="0 0 16 16" className="w-4 h-4"><path d="M4 10.500L8 1.500l4 9M5.500 7.500h5" fill="none" stroke="#3b3b3b" strokeWidth="1.900" /><path d="M0 12h16v4H0z" fill="#f00" /></svg>
            </Slot>
            <Slot w="w-[10px]" label="Más colores"><Caret /></Slot>
          </div>
        </Group>

        <Group title="Párrafo" width="w-[225px]" launcher>
          <div className="flex items-center pl-[3px] pt-[7px]">
            <Slot w="w-6" label="Viñetas"><ListIcon marks="dots" /></Slot>
            <Slot w="w-[10px]" label="Más viñetas"><Caret /></Slot>
            <Slot w="w-6" label="Numeración"><ListIcon marks="nums" /></Slot>
            <Slot w="w-[10px]" label="Más numeración"><Caret /></Slot>
            <Slot w="w-[22px]" label="Multinivel"><ListIcon marks="multi" /></Slot>
            <Slot w="w-[10px]" label="Más multinivel"><Caret /></Slot>
            <Sep w="w-3" />
            <Slot w="w-[22px]" label="Disminuir sangría"><IndentIcon out /></Slot>
            <Slot w="w-[22px]" label="Aumentar sangría"><IndentIcon /></Slot>
            <Sep w="w-2" />
            <Slot w="w-6" label="Ordenar">
              <svg viewBox="0 0 14 16" className="w-[14px] h-4"><path d="M.7 7L3.200 1l2.500 6M1.500 5h3.400" fill="none" stroke="#2a6099" strokeWidth="1.200" /><path d="M1 9.500h4.500L1 15h5" fill="none" stroke="#7e3f98" strokeWidth="1.300" /><path d="M10.500 1v13M8 11.500l2.500 3 2.500-3" fill="none" stroke="#3b3b3b" strokeWidth="1.200" /></svg>
            </Slot>
            <Sep w="w-2" />
            <Slot w="w-[22px]" label="Marcas de párrafo">
              <svg viewBox="0 0 10 13" className="w-[10px] h-[13px]"><path d="M9.500.700H4a3.200 3.200 0 0 0 0 6.400h1V.700M5 1v12M8 1v12" fill="none" stroke="#3b3b3b" strokeWidth="1.300" /><circle cx="3.700" cy="3.800" r="3" fill="#3b3b3b" /></svg>
            </Slot>
          </div>
          <div className="flex items-center pl-[3px] pt-2">
            <Slot w="w-[22px]" label="Izquierda"><Lines ends={left} /></Slot>
            <Slot w="w-[22px]" label="Centro"><Lines ends={center} /></Slot>
            <Slot w="w-[22px]" label="Derecha"><Lines ends={right} /></Slot>
            <Slot w="w-[22px]" on label="Justificar"><Lines ends={full} /></Slot>
            <Sep w="w-[10px]" />
            <Slot w="w-[22px]" label="Espaciado">
              <svg viewBox="0 0 14 16" className="w-[14px] h-4" fill="none"><path d="M3 1.500v13M.7 4L3 1.500 5.300 4M.7 12L3 14.500 5.300 12" stroke="#2a6099" strokeWidth="1.300" /><path d="M7 3.500h7M7 6.500h7M7 9.500h7M7 12.500h7" stroke="#3b3b3b" /></svg>
            </Slot>
            <Slot w="w-2" label="Más espaciado"><Caret /></Slot>
            <Sep w="w-[14px]" />
            <Slot w="w-5" label="Sombreado">
              <svg viewBox="0 0 16 16" className="w-4 h-4"><path d="M2 7l5-5 6 5-6 5z" fill="#fff" stroke="#444" /><path d="M7 2q-1-2 1.500-1" stroke="#444" fill="none" /><path d="M12 5q4 1 3 6-2-1-3-4z" fill="#2a6099" /><path d="M.5 13h15v2.500H.5z" fill="#ddd" stroke="#999" /></svg>
            </Slot>
            <Slot w="w-3" label="Más sombreado"><Caret /></Slot>
            <Slot w="w-[34px]" on label="Bordes">
              <svg viewBox="0 0 14 13" className="w-[14px] h-[13px] mr-[7px]"><path d="M0 0h14v12H0z" fill="#fff" /><path d="M.5 0v12M7 0v12M13.500 0v12M0 .500h14M0 6h14" stroke="#333" strokeDasharray="1 1.500" /><path d="M0 12.500h14" stroke="#222" strokeWidth="1.500" /></svg>
              <Caret />
            </Slot>
          </div>
        </Group>

        <Group title="Estilos" width="w-[750px]" launcher>
          <div className="mt-[2px] ml-[5px] mr-[6px] h-[60px] border border-[#6a6a6a] bg-[#d4d4d4] flex">
            <div className="flex-1 flex gap-[7px] pl-1 items-center">
              {styleCards.map((s, i) => (
                <button key={i} className="w-[65px] h-12 shrink-0 bg-white flex flex-col items-center justify-between pt-[5px] px-[2px] overflow-hidden">
                  <span className={"w-full h-[22px] leading-5 overflow-hidden text-left whitespace-nowrap font-['Liberation_Serif',serif] " + s.look}>{s.sample}</span>
                  <span className="whitespace-nowrap text-[#4a4a4a] leading-[15px]">{s.name}</span>
                </button>
              ))}
            </div>
            <div className="w-[14px] border-l border-[#6a6a6a] flex flex-col">
              <button aria-label="Subir" className="flex-1 flex items-center justify-center rotate-180"><Caret className="text-[#a0a0a0]" /></button>
              <button aria-label="Bajar" className="flex-1 flex items-center justify-center border-y border-[#6a6a6a] bg-[#c0c0c0]"><Caret /></button>
              <button aria-label="Más estilos" className="flex-1 flex flex-col gap-[2px] items-center justify-center bg-[#c0c0c0]"><span className="w-[6px] h-px bg-[#333]" /><Caret /></button>
            </div>
          </div>
        </Group>

        <Group title="Edición" width="w-[106px]">
          <div className="flex flex-col items-start pl-2">
            <button className="h-[23px] flex items-center gap-1"><Lens className="w-[15px] h-[15px] text-[#2a6099]" />Buscar<span className="ml-2"><Caret /></span></button>
            <button className="h-[23px] flex items-center gap-1">
              <svg viewBox="0 0 15 15" className="w-[15px] h-[15px] font-['Open_Sans',sans-serif]" fontSize="9" fontWeight="700"><text x="0" y="7" fill="#3b3b3b">a</text><text x="5" y="7" fill="#7e3f98">b</text><text x="4" y="15" fill="#3b3b3b">a</text><text x="10" y="15" fill="#2a6099">c</text><path d="M.5 9v3h3" stroke="#2a6099" fill="none" /></svg>
              Reemplazar
            </button>
            <button className="h-[23px] flex items-center gap-1">
              <svg viewBox="0 0 15 15" className="w-[15px] h-[15px]"><path d="M5 1v11l2.500-2.500L9.500 14l1.500-.8-2-4H12z" fill="#fff" stroke="#444" /></svg>
              Seleccionar<Caret />
            </button>
          </div>
        </Group>
        <button aria-label="Contraer la cinta" className="ml-auto self-end mr-[10px] mb-[6px]">
          <svg viewBox="0 0 9 6" className="w-[9px] h-[6px]" fill="none" stroke="#222" strokeWidth="1.800"><path d="M.7 5.300l3.800-4 3.800 4" /></svg>
        </button>
      </div>

      <main className="flex-1 min-h-0 overflow-hidden flex justify-center pr-[17px]">
        <article className="w-[791px] bg-white text-black font-['DejaVu_Sans',sans-serif] pl-[74px] pr-[73px] flex">
          <div className="flex-1 border-x border-black pl-2 pr-[7px] pt-[10px]">
            <p className="text-[15px] leading-5 whitespace-nowrap">
              <span className="block [text-align-last:justify]">CSS sirve para definir la estética de un sitio web en un documento externo y</span>
              <span className="block [text-align-last:justify]">eso mismo permite que modificando ese documento (la hoja CSS) podamos</span>
              <span className="block [text-align-last:justify]">cambiar la estética entera de un sitio web… ese es precisamente el poder de</span>
              <span className="block [text-align-last:justify]">CSS, en otras palabras, el mismo sitio web puede variar totalmente de estética</span>
              <span className="block">cambiando solo la CSS, sin tocar para nada los documentos HTML.</span>
            </p>
            <h2 className="mt-[18px] text-[15px] leading-5 font-bold underline underline-offset-2 decoration-1">
              <span className="underline decoration-wavy decoration-[#e33] decoration-1">Porpiedades</span>{" "}
              <span className="underline decoration-wavy decoration-[#e33] decoration-1">css</span>:
            </h2>
            <figure className="ml-[136px] mt-[23px]">
              <h3 className="text-[11px] leading-[14px]">Propiedades de Animación</h3>
              <div className="ml-[10px] mt-1">
                <PropertyTable small rows={animationRows} cols={["w-[68px]", "w-[265px]", "w-[18px]"]} />
              </div>
              <h3 className="mt-[6px] text-[11px] leading-[14px]">Propiedades de Fondo</h3>
              <div className="ml-[10px] mt-[5px]">
                <PropertyTable small rows={fondoRows} cols={["w-[64px]", "w-[265px]", "w-[18px]"]} />
              </div>
            </figure>
          </div>
        </article>
      </main>

      <footer className="h-[22px] shrink-0 border-t border-[#444] flex items-center pl-2 pr-2 text-white">
        <span>Página 12 de 13</span>
        <span className="ml-5">1470 palabras</span>
        <svg viewBox="0 0 16 13" className="w-4 h-[13px] ml-[18px]" fill="none" stroke="#fff"><path d="M7.500 2.500Q4 0 .5 1.500v9Q4 9.500 7.500 12q2-1.500 4-1.500M7.500 2.500V12M7.500 2.500Q9 1 14 1.500M10 4l4 5M14 4l-4 5" /></svg>
        <span className="ml-4">Español (Colombia)</span>
        <div className="ml-auto flex items-center h-full">
          <button aria-label="Modo de lectura" className="w-[38px] flex justify-center"><svg viewBox="0 0 13 12" className="w-[13px] h-3" fill="none" stroke="#fff"><path d="M.5.500h5l1 1 1-1h5v10h-5l-1 1-1-1h-5zM6.500 1v11M2 3.500h3M2 5.500h3M2 7.500h3M8 3.500h3M8 5.500h3M8 7.500h3" /></svg></button>
          <button aria-label="Diseño de impresión" className="w-[38px] h-full bg-[#444] flex items-center justify-center"><svg viewBox="0 0 13 13" className="w-[13px] h-[13px]" fill="none" stroke="#fff"><path d="M.5.500h12v12H.5zM2.500 3h8M2.500 5h8M2.500 7h8M2.500 9h8M2.500 11h8" /></svg></button>
          <button aria-label="Diseño web" className="w-[38px] flex justify-center"><svg viewBox="0 0 14 13" className="w-[14px] h-[13px]" fill="none" stroke="#fff"><path d="M6 11.500H.5v-11h10V5M2.500 3h6M2.500 5h5M2.500 7h3M2.500 9h3" /><circle cx="10" cy="9" r="3.500" fill="#ddd" /></svg></button>
          <button aria-label="Alejar" className="w-2 h-[2px] bg-white ml-1 mr-1" />
          <input
            type="range"
            aria-label="Zoom"
            defaultValue={50}
            className="appearance-none w-[100px] h-px bg-white [&::-webkit-slider-thumb]:appearance-none [&::-webkit-slider-thumb]:w-[5px] [&::-webkit-slider-thumb]:h-[11px] [&::-webkit-slider-thumb]:bg-white"
          />
          <button aria-label="Acercar" className="ml-1"><svg viewBox="0 0 8 8" className="w-2 h-2" stroke="#fff" strokeWidth="2"><path d="M4 0v8M0 4h8" /></svg></button>
          <span className="ml-[10px]">100%</span>
        </div>
      </footer>
    </section>
  );
}

export default function App() {
  return (
    <div className="h-screen grid grid-cols-2 overflow-hidden">
      <div className="flex flex-col min-h-0 min-w-0">
        <Browser />
        <Taskbar>
          <svg viewBox="0 0 15 15" className="w-[15px] h-[15px] mr-7" fill="none" stroke="#fff" strokeWidth="1.200"><circle cx="10.500" cy="3.500" r="2.800" /><path d="M7 9q3.500-4 7.500 1" /><circle cx="4.500" cy="7.500" r="2.500" /><path d="M.7 14.500q.5-4.500 4-4.500t3.800 4.500" /></svg>
          <svg viewBox="0 0 12 7" className="w-3 h-[7px] mr-[10px]" fill="none" stroke="#fff" strokeWidth="1.300"><path d="M.5 6.500L6 1l5.500 5.500" /></svg>
          <svg viewBox="0 0 16 15" className="w-4 h-[15px] mr-2" fill="none" stroke="#fff"><path d="M5 3.500h10.500v7H4.500V8M.5 1.500h4v4h-4zM2.500 5.500v8M10 10.500v3M6 13.500h8" /></svg>
          <svg viewBox="0 0 16 13" className="w-4 h-[13px] mr-3" fill="none" stroke="#fff"><path d="M.5 4.500h2.500L6.500 1.500v10L3 8.500H.5zM8.500 4.500q1.500 2 0 4M10.500 2.500q3 4 0 8M12.500 1q4.500 5.500 0 11" /></svg>
          <span className="mr-[13px]">ESP</span>
          <Clock />
          <svg viewBox="0 0 24 24" className="w-6 h-6 ml-[17px] mr-[12px]">
            <path d="M0 0h17v13H9l-3 3v-3H0z" fill="#fff" />
            <path d="M3 3.500h11M3 6.500h11M3 9.500h11" stroke="#060c14" />
            <circle cx="15" cy="15" r="8" fill="#333" stroke="#999" />
            <text x="15" y="19" textAnchor="middle" fontSize="11" fill="#fff" className="font-['Open_Sans',sans-serif]">2</text>
          </svg>
          <span className="w-px h-10 bg-[#5a5f66] mr-1" />
        </Taskbar>
      </div>
      <div className="flex flex-col min-h-0 min-w-0">
        <WordProcessor />
        <Taskbar>
          <span className="pr-1"><Clock /></span>
        </Taskbar>
      </div>
    </div>
  );
}
